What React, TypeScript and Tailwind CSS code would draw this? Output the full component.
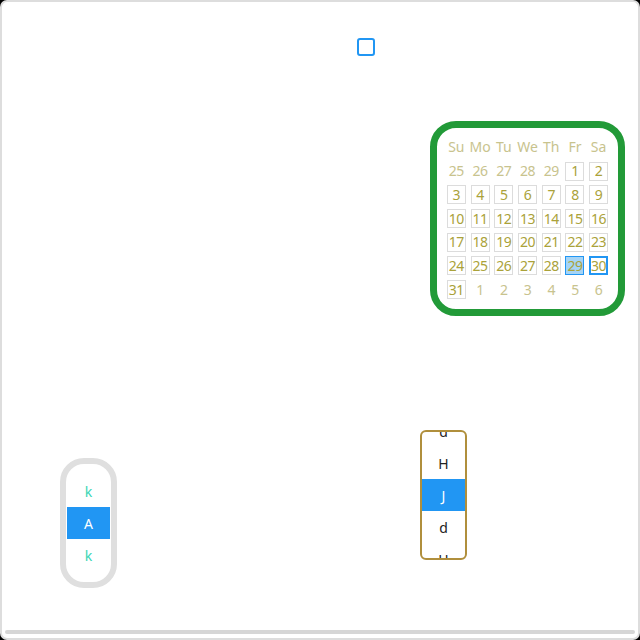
import React from "react";

const days: { d: number; cur: boolean }[] = [
  ...[25, 26, 27, 28, 29].map((d) => ({ d, cur: false })),
  ...Array.from({ length: 31 }, (_, i) => ({ d: i + 1, cur: true })),
  ...[1, 2, 3, 4, 5, 6].map((d) => ({ d, cur: false })),
];

const heads = ["Su", "Mo", "Tu", "We", "Th", "Fr", "Sa"];

const Calendar: React.FC = () => (
  <div className="w-[195px] h-[195px] rounded-[26px] border-[7px] border-[#229a38] bg-white flex items-center justify-center">
    <div className="grid grid-cols-7 w-[166px] text-[14px] leading-none">
      {heads.map((h) => (
        <div key={h} className="h-[23.7px] flex items-center justify-center text-[#c8c38e]">
          {h}
        </div>
      ))}
      {days.map((c, i) => {
        let box = "border border-[#dcdcdc] text-[#aaa23a]";
        if (!c.cur) box = "border border-transparent text-[#c8c38e]";
        else if (c.d === 29) box = "border border-[#2196f3] bg-[#a6d4f5] text-[#aaa23a]";
        else if (c.d === 30) box = "border-2 border-[#2196f3] text-[#aaa23a]";
        return (
          <div key={i} className="h-[23.7px] flex items-center justify-center">
            <div className={`w-[19px] h-[19px] flex items-center justify-center ${box}`}>
              <span className="whitespace-nowrap tracking-[-0.5px]">{c.d}</span>
            </div>
          </div>
        );
      })}
    </div>
  </div>
);

const App: React.FC = () => {
  return (
    <div className="w-[640px] h-[640px] bg-black" style={{ fontFamily: '"Noto Sans", "DejaVu Sans", sans-serif' }}>
      <div className="relative w-full h-full bg-white border-2 border-[#dddddd] rounded-[7px] overflow-hidden">
        <div className="absolute left-[355px] top-[36px] w-[18px] h-[18px] border-2 border-[#2196f3] rounded-[3px]" />

        <div className="absolute left-[428px] top-[119px]">
          <Calendar />
        </div>

        <div className="absolute left-[58px] top-[456px] w-[57px] h-[130px] rounded-[24px] border-[6px] border-[#dfdfdf] bg-white py-[11px] px-px text-[14px]">
          <div className="h-8 flex items-center justify-center text-[#3ad6b4]">k</div>
          <div className="h-8 flex items-center justify-center bg-[#2196f3] text-white">A</div>
          <div className="h-8 flex items-center justify-center text-[#3ad6b4]">k</div>
        </div>

        <div className="absolute left-[418px] top-[428px] w-[47px] h-[130px] rounded-[6px] border-2 border-[#b08f3c] bg-white overflow-hidden text-[14px] text-[#222]">
          <div className="-mt-[17px]">
            <div className="h-8 flex items-center justify-center">d</div>
            <div className="h-8 flex items-center justify-center">H</div>
            <div className="h-8 flex items-center justify-center bg-[#2196f3] text-white">J</div>
            <div className="h-8 flex items-center justify-center">d</div>
            <div className="h-8 flex items-center justify-center">H</div>
          </div>
        </div>

        <div className="absolute left-[3px] right-[3px] top-[628px] h-[4px] rounded-full bg-[#d6d6d6]" />
      </div>
    </div>
  );
};

export default App;
